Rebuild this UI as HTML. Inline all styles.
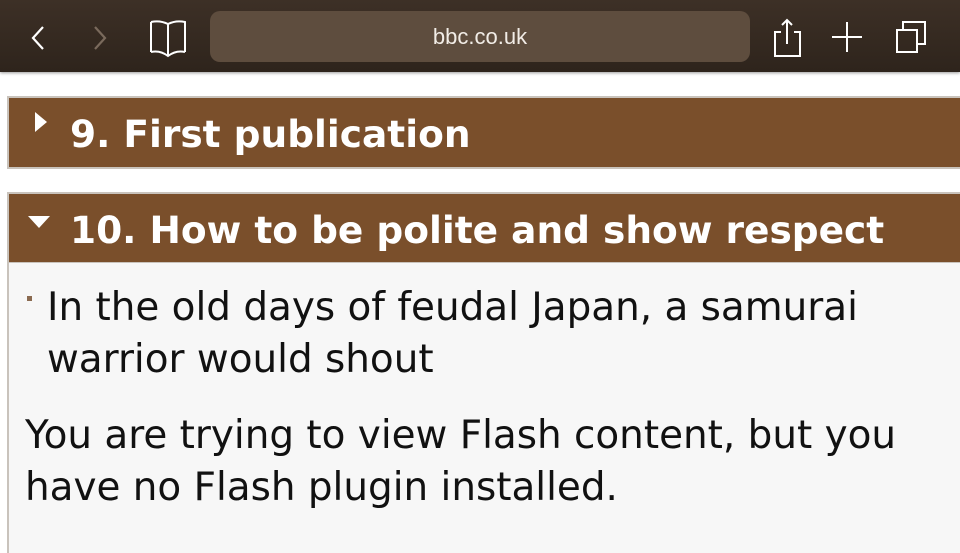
<!DOCTYPE html>
<html><head><style>
*{margin:0;padding:0;box-sizing:border-box}
body{width:960px;height:540px;overflow:hidden;background:#fff;font-family:"DejaVu Sans","Liberation Sans",sans-serif;position:relative}
.bar{position:absolute;left:0;top:0;width:960px;height:72px;background:linear-gradient(#3d3026,#2e241c);box-shadow:0 1px 3px rgba(0,0,0,.4)}
.url{position:absolute;left:210px;top:11px;width:540px;height:51px;border-radius:10px;background:#5e4d3e;color:#f1ece6;font:22px "Liberation Sans",sans-serif;text-align:center;line-height:51px}
.h{position:absolute;left:7px;width:960px;background:#7a4f2b;border:2px solid #c9c3bc;border-right:none;color:#fff;font-weight:bold;font-size:37.5px;line-height:66px}
.h span{position:absolute;left:61px;top:0;white-space:nowrap}
.box{position:absolute;left:7px;top:263px;width:960px;height:290px;background:#f7f7f7;border-left:2px solid #c9c3bc}
.t{position:absolute;font-size:38.9px;color:#111;line-height:52px;white-space:nowrap}
svg{position:absolute}
</style></head><body>
<div class="bar">
<svg width="960" height="72" fill="none" stroke="#fff" stroke-width="2.2">
<path d="M43 27 L33 38 L43 49"/>
<path d="M95 27 L105 38 L95 49" stroke="#7a6a5c"/>
<path d="M151 22 V52 M151 22 Q160 20 168 24 Q176 20 185 22 V52 M168 24 V56 M151 52 Q160 50 168 56 Q176 50 185 52" stroke-width="2"/>
<path d="M733 31 A9 9 0 1 0 735 42 M730 22 L734 30 L726 32" stroke-width="2"/>
<path d="M781 32 H775 V56 H800 V32 H794 M787 20 V44 M782 25 L787 20 L792 25" stroke-width="2"/>
<path d="M847 22 V52 M832 37 H862" stroke-width="2"/>
<rect x="897" y="30" width="20" height="22" stroke-width="2"/>
<path d="M903 30 V22 H925 V44 H917" stroke-width="2"/>
</svg>
<div class="url">bbc.co.uk</div>
</div>
<div class="h" style="top:96px;height:73px"><svg width="20" height="30" style="left:24px;top:12px"><path d="M2 2 L14 12 L2 22Z" fill="#fff"/></svg><span style="top:3px">9. First publication</span></div>
<div class="h" style="top:192px;height:72px"><svg width="30" height="20" style="left:17px;top:20px"><path d="M2 2 H24 L13 14Z" fill="#fff"/></svg><span style="top:3px">10. How to be polite and show respect</span></div>
<div class="box"></div>
<div style="position:absolute;left:27px;top:296px;width:5px;height:5px;background:#8a6a50"></div>
<div class="t" style="left:47px;top:282px">In the old days of feudal Japan, a samurai<br>warrior would shout</div>
<div class="t" style="left:25px;top:410px">You are trying to view Flash content, but you<br>have no Flash plugin installed.</div>
</body></html>
